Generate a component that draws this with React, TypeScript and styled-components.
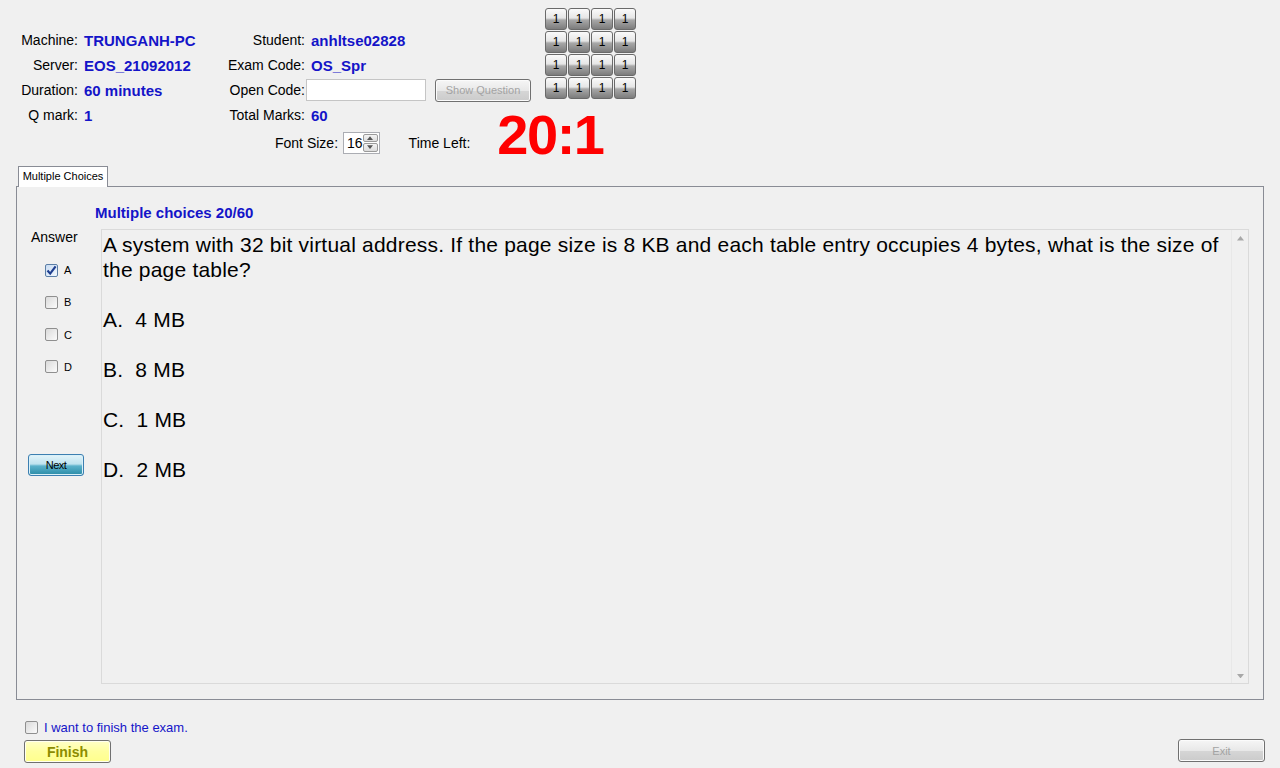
import React from "react";
import styled, { createGlobalStyle } from "styled-components";

const GlobalStyle = createGlobalStyle`
    html, body {
        margin: 0;
        padding: 0;
        background: #f0f0f0;
    }
`;

const Page = styled.div`
    width: 1280px;
    height: 768px;
    display: flex;
    flex-direction: column;
    background: #f0f0f0;
    font-family: "Liberation Sans", Arial, sans-serif;
    color: #000;
    overflow: hidden;
`;

const Header = styled.div`
    display: flex;
    height: 166px;
    box-sizing: border-box;
    padding-top: 8px;
`;

const LeftCol = styled.div`
    width: 545px;
    padding-top: 19.5px;
    display: flex;
    flex-direction: column;
`;

const InfoGrid = styled.div`
    display: grid;
    grid-template-columns: 78px 144px 83px 1fr;
    grid-auto-rows: 25px;
    align-items: center;
`;

const Label = styled.div`
    text-align: right;
    font-size: 14px;
    white-space: nowrap;
`;

const Value = styled.div`
    padding-left: 6px;
    font-size: 15px;
    font-weight: bold;
    color: #1414c8;
    white-space: nowrap;
`;

const CodeRow = styled.div`
    display: flex;
    align-items: center;
    gap: 9px;
    padding-left: 1px;
`;

const CodeInput = styled.div`
    width: 120px;
    height: 22px;
    box-sizing: border-box;
    background: #fff;
    border: 1px solid #c5c5c5;
`;

const GlossButton = styled.button<{ w: number; h: number }>`
    width: ${(p) => p.w}px;
    height: ${(p) => p.h}px;
    box-sizing: border-box;
    padding: 0;
    border: 1px solid #707070;
    border-radius: 3px;
    background: linear-gradient(#f6f6f6 0%, #e8e8e8 50%, #d6d6d6 51%, #cbcbcb 100%);
    font-family: "Liberation Sans", Arial, sans-serif;
    font-size: 11px;
    color: #a3a3a3;
    box-shadow: inset 0 0 0 1px #fbfbfb;
`;

const FontRow = styled.div`
    display: flex;
    align-items: center;
    height: 30px;
    padding-left: 275px;
`;

const SmallLabel = styled.span<{ gap: number }>`
    font-size: 14px;
    margin-right: ${(p) => p.gap}px;
    white-space: nowrap;
`;

const Spinner = styled.div`
    width: 42px;
    height: 22px;
    box-sizing: border-box;
    display: flex;
    background: #fff;
    border: 1px solid #abadb3;
    margin-right: 29px;
`;

const SpinValue = styled.div`
    flex: 1;
    font-size: 14px;
    line-height: 20px;
    padding-left: 3px;
`;

const SpinButtons = styled.div`
    width: 15px;
    display: flex;
    flex-direction: column;
    padding: 1px 1px 1px 0;
    gap: 1px;
`;

const SpinBtn = styled.div`
    flex: 1;
    border: 1px solid #9a9a9a;
    border-radius: 2px;
    background: linear-gradient(#f4f4f4, #dcdcdc);
    display: flex;
    align-items: center;
    justify-content: center;
`;

const Clock = styled.div`
    font-size: 56px;
    font-weight: bold;
    color: #f00;
    line-height: 30px;
    margin-bottom: 15px;
    letter-spacing: -1.5px;
`;

const NumGrid = styled.div`
    display: grid;
    grid-template-columns: repeat(4, 22px);
    grid-auto-rows: 22px;
    gap: 1px;
    align-self: flex-start;
`;

const NumButton = styled.div`
    box-sizing: border-box;
    border: 1px solid #6a6a6a;
    border-radius: 3px;
    background: linear-gradient(#fafafa 0%, #e6e6e6 45%, #a8a8a8 55%, #7c7c7c 100%);
    display: flex;
    align-items: center;
    justify-content: center;
    font-size: 12px;
    color: #000;
`;

const TabStrip = styled.div`
    display: flex;
    padding-left: 18px;
    height: 20px;
`;

const Tab = styled.div`
    width: 90px;
    height: 21px;
    box-sizing: border-box;
    border: 1px solid #898c95;
    border-bottom: none;
    background: #fff;
    font-size: 11px;
    line-height: 19px;
    text-align: center;
    position: relative;
    z-index: 1;
    white-space: nowrap;
`;

const Panel = styled.div`
    margin-left: 16px;
    width: 1248px;
    height: 514px;
    box-sizing: border-box;
    border: 1px solid #898c95;
    display: grid;
    grid-template-columns: 84px 1fr;
    grid-template-rows: 42px 1fr;
    padding: 0 14px 15px 0;
`;

const Title = styled.div`
    grid-column: 1 / -1;
    align-self: end;
    padding-left: 78px;
    margin-bottom: 8px;
    line-height: 16px;
    font-size: 15px;
    font-weight: bold;
    color: #1414c8;
`;

const Side = styled.div`
    display: flex;
    flex-direction: column;
    align-items: flex-start;
`;

const AnswerLabel = styled.div`
    margin-left: 14px;
    font-size: 14px;
    line-height: 16px;
`;

const ChoiceRow = styled.div<{ first?: boolean }>`
    display: flex;
    align-items: center;
    gap: 6px;
    margin-left: 28px;
    margin-top: ${(p) => (p.first ? 17 : 16.3)}px;
    height: 16px;
    font-size: 11px;
`;

const Box = styled.span<{ checked?: boolean }>`
    width: 13px;
    height: 13px;
    box-sizing: border-box;
    border: 1px solid ${(p) => (p.checked ? "#5b7ea6" : "#8f8f8f")};
    border-radius: 2px;
    background: ${(p) =>
        p.checked
            ? "linear-gradient(135deg, #c9dcf2, #f2f7fd)"
            : "linear-gradient(135deg, #dadada, #fbfbfb)"};
    display: flex;
    align-items: center;
    justify-content: center;
    flex-shrink: 0;
`;

const NextButton = styled.button`
    margin-left: 11px;
    margin-top: 79px;
    width: 56px;
    height: 22px;
    box-sizing: border-box;
    padding: 0;
    border: 1px solid #3c7fb1;
    border-radius: 3px;
    background: linear-gradient(#e3f4fa 0%, #bfe3ef 45%, #5bb2cb 55%, #2a8ba6 100%);
    box-shadow: inset 0 0 0 1px #d9f0f8;
    font-family: "Liberation Sans", Arial, sans-serif;
    font-size: 11px;
    letter-spacing: -0.5px;
    color: #000;
`;

const QuestionBox = styled.div`
    display: flex;
    border: 1px solid #dadada;
    min-height: 0;
`;

const QuestionText = styled.div`
    flex: 1;
    padding: 2px 2px 0 1px;
    font-size: 21px;
    letter-spacing: 0.2px;
    line-height: 25px;
    white-space: pre-wrap;
`;

const ScrollBar = styled.div`
    width: 16px;
    border-left: 1px solid #e8e8e8;
    display: flex;
    flex-direction: column;
    justify-content: space-between;
    align-items: center;
    padding: 6px 0 5px;
`;

const Footer = styled.div`
    flex: 1;
    display: flex;
    justify-content: space-between;
    align-items: flex-end;
    padding: 0 15px 5px 24px;
`;

const FooterLeft = styled.div`
    display: flex;
    flex-direction: column;
    align-items: flex-start;
    gap: 5px;
`;

const FinishRow = styled.div`
    display: flex;
    align-items: center;
    gap: 6px;
    padding-left: 1px;
    height: 16px;
    font-size: 13px;
    color: #1414c8;
`;

const FinishButton = styled.button`
    width: 87px;
    height: 23px;
    box-sizing: border-box;
    padding: 0;
    border: 1px solid #707070;
    border-radius: 3px;
    background: linear-gradient(#ffffc8 0%, #ffff9e 50%, #ffff8c 100%);
    box-shadow: inset 0 0 0 1px #fffff0;
    font-family: "Liberation Sans", Arial, sans-serif;
    font-size: 14px;
    font-weight: bold;
    color: #8c8c00;
`;

const ExitButton = styled(GlossButton)`
    margin-bottom: 1px;
`;

const Arrow: React.FC<{ up?: boolean; color?: string; size?: number }> = ({ up, color = "#a8a8a8", size = 7 }) => (
    <svg width={size} height={size / 2 + 1} viewBox="0 0 8 5">
        {up ? <polygon points="0,5 8,5 4,0" fill={color} /> : <polygon points="0,0 8,0 4,5" fill={color} />}
    </svg>
);

const Check: React.FC = () => (
    <svg width="11" height="11" viewBox="0 0 11 11">
        <path d="M1.5 5.5 L4.2 8.6 L9.6 1.4" stroke="#1f3f8f" strokeWidth="2.2" fill="none" />
    </svg>
);

const info = [
    ["Machine:", "TRUNGANH-PC", "Student:", "anhltse02828"],
    ["Server:", "EOS_21092012", "Exam Code:", "OS_Spr"],
    ["Duration:", "60 minutes", "Open Code:", null],
    ["Q mark:", "1", "Total Marks:", "60"],
];

const choices = ["A", "B", "C", "D"];

const question =
    "A system with 32 bit virtual address. If the page size is 8 KB and each table entry occupies 4 bytes, what is the size of the page table?\n\nA.  4 MB\n\nB.  8 MB\n\nC.  1 MB\n\nD.  2 MB";

export default function App() {
    return (
        <Page>
            <GlobalStyle />
            <Header>
                <LeftCol>
                    <InfoGrid>
                        {info.map((row, i) => (
                            <React.Fragment key={i}>
                                <Label>{row[0]}</Label>
                                <Value>{row[1]}</Value>
                                <Label>{row[2]}</Label>
                                {row[3] !== null ? (
                                    <Value>{row[3]}</Value>
                                ) : (
                                    <CodeRow>
                                        <CodeInput />
                                        <GlossButton w={96} h={23}>Show Question</GlossButton>
                                    </CodeRow>
                                )}
                            </React.Fragment>
                        ))}
                    </InfoGrid>
                    <FontRow>
                        <SmallLabel gap={5}>Font Size:</SmallLabel>
                        <Spinner>
                            <SpinValue>16</SpinValue>
                            <SpinButtons>
                                <SpinBtn><Arrow up color="#555" size={6} /></SpinBtn>
                                <SpinBtn><Arrow color="#555" size={6} /></SpinBtn>
                            </SpinButtons>
                        </Spinner>
                        <SmallLabel gap={27}>Time Left:</SmallLabel>
                        <Clock>20:1</Clock>
                    </FontRow>
                </LeftCol>
                <NumGrid>
                    {Array.from({ length: 16 }, (_, i) => (
                        <NumButton key={i}>1</NumButton>
                    ))}
                </NumGrid>
            </Header>
            <TabStrip>
                <Tab>Multiple Choices</Tab>
            </TabStrip>
            <Panel>
                <Title>Multiple choices 20/60</Title>
                <Side>
                    <AnswerLabel>Answer</AnswerLabel>
                    {choices.map((c, i) => (
                        <ChoiceRow key={c} first={i === 0}>
                            <Box checked={i === 0}>{i === 0 && <Check />}</Box>
                            {c}
                        </ChoiceRow>
                    ))}
                    <NextButton>Next</NextButton>
                </Side>
                <QuestionBox>
                    <QuestionText>{question}</QuestionText>
                    <ScrollBar>
                        <Arrow up />
                        <Arrow />
                    </ScrollBar>
                </QuestionBox>
            </Panel>
            <Footer>
                <FooterLeft>
                    <FinishRow>
                        <Box />
                        I want to finish the exam.
                    </FinishRow>
                    <FinishButton>Finish</FinishButton>
                </FooterLeft>
                <ExitButton w={87} h={23}>Exit</ExitButton>
            </Footer>
        </Page>
    );
}
